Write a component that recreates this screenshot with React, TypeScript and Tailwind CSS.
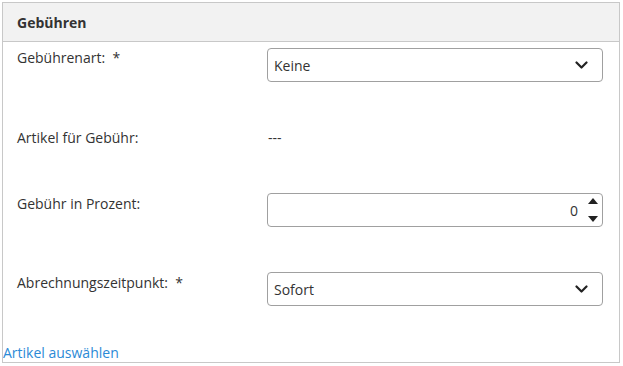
import React from 'react';

const font = { fontFamily: '"Open Sans", "Noto Sans", sans-serif' };

const Chevron = () => (
  <svg width="13" height="9" viewBox="0 0 13 9" className="text-[#222]">
    <path d="M1.5 1.5 L6.5 6.5 L11.5 1.5" fill="none" stroke="currentColor" strokeWidth="2.2" strokeLinecap="round" strokeLinejoin="round" />
  </svg>
);

const SelectBox: React.FC<{ value: string }> = ({ value }) => (
  <div className="w-[336px] h-[34px] border border-[#a0a0a0] rounded-[4px] bg-white flex items-center justify-between pl-[6px] pr-[14px]">
    <span className="text-[14px] text-[#333]">{value}</span>
    <Chevron />
  </div>
);

const NumberBox: React.FC<{ value: string }> = ({ value }) => (
  <div className="w-[336px] h-[34px] border border-[#a0a0a0] rounded-[4px] bg-white flex items-center justify-end pr-[4px]">
    <span className="text-[14px] text-[#333] mr-[10px]">{value}</span>
    <div className="flex flex-col justify-between h-[24px] items-center">
      <svg width="10" height="6" viewBox="0 0 10 6"><path d="M0 6 L5 0 L10 6 Z" fill="#222" /></svg>
      <svg width="10" height="6" viewBox="0 0 10 6"><path d="M0 0 L5 6 L10 0 Z" fill="#222" /></svg>
    </div>
  </div>
);

export default function App() {
  return (
    <div className="w-[623px] h-[366px] bg-white pt-[2px] pl-[2px]" style={font}>
      <div className="w-[618px] h-[361px] border border-[#c8c8c8] flex flex-col overflow-hidden">
        <div className="h-[37px] shrink-0 bg-[#f2f2f2] border-b border-[#c8c8c8] box-content flex items-center px-[14px] pt-[1px]">
          <span className="text-[14px] font-bold text-[#333]">Gebühren</span>
        </div>
        <div className="flex flex-col shrink-0 pl-[14px] pt-[6px]">
          <div className="flex h-[80px] shrink-0">
            <div className="w-[250px] text-[14px] text-[#333] leading-[20px]">Gebührenart:&nbsp; *</div>
            <SelectBox value="Keine" />
          </div>
          <div className="flex h-[65px] shrink-0">
            <div className="w-[250px] text-[14px] text-[#333] leading-[20px]">Artikel für Gebühr:</div>
            <div className="text-[14px] text-[#333] leading-[20px] pl-[1px]">---</div>
          </div>
          <div className="flex h-[79px] shrink-0">
            <div className="w-[250px] text-[14px] text-[#333] leading-[20px] pt-[1px]">Gebühr in Prozent:</div>
            <NumberBox value="0" />
          </div>
          <div className="flex h-[72px] shrink-0">
            <div className="w-[250px] text-[14px] text-[#333] leading-[20px] pt-[1px]">Abrechnungszeitpunkt:&nbsp; *</div>
            <SelectBox value="Sofort" />
          </div>
        </div>
        <a className="shrink-0 text-[14px] text-[#2b8ad6] leading-[18px]">Artikel auswählen</a>
      </div>
    </div>
  );
}
